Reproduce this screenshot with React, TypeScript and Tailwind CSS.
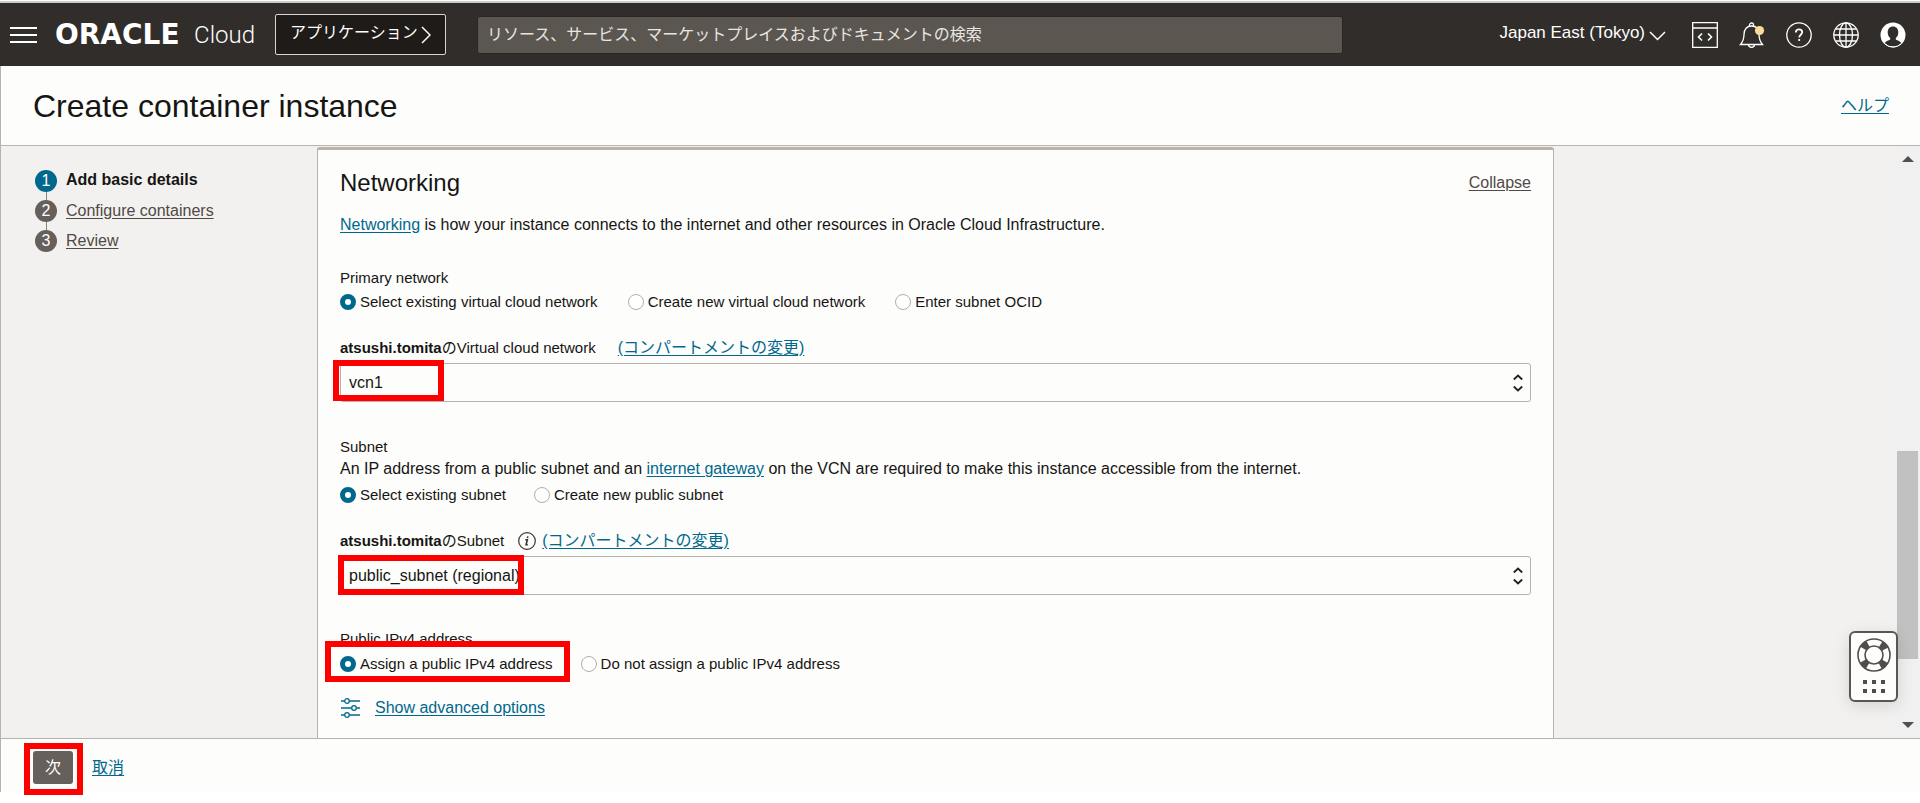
import { useState } from 'react'
import type { ReactNode } from 'react'

const linkClass = 'text-[#00688c] underline underline-offset-2'

function Highlight({ className }: { className: string }) {
  return <div aria-hidden="true" className={`pointer-events-none absolute z-10 border-6 border-[#ff0000] ${className}`} />
}

function TopBar() {
  return (
    <header className="flex h-[63px] items-center bg-[#312d2a] pr-[14px] pl-[10px] text-white">
      <button aria-label="Menu" className="flex w-[27px] shrink-0 flex-col gap-[5px]">
        <span className="h-[2px] bg-white" />
        <span className="h-[2px] bg-white" />
        <span className="h-[2px] bg-white" />
      </button>
      <a href="#home" className="ml-[18px] flex w-[200px] shrink-0 items-center justify-between whitespace-nowrap">
        <span className="font-['DejaVu_Sans',sans-serif] text-[28px] leading-8 font-bold">ORACLE</span>
        <span className="font-[Roboto,sans-serif] text-2xl leading-8 font-light">Cloud</span>
      </a>
      <button className="ml-5 flex h-[41px] w-[171px] shrink-0 items-center justify-between rounded-[2px] border border-[#d8d4d0] bg-[#1e1b18] px-[14px] pb-1 text-base whitespace-nowrap">
        アプリケーション
        <svg width="10" height="18" viewBox="0 0 10 18" fill="none" stroke="#fff" strokeWidth="1.5" className="mt-1">
          <path d="M1 1l8 8-8 8" />
        </svg>
      </button>
      <input
        type="search"
        aria-label="検索"
        placeholder="リソース、サービス、マーケットプレイスおよびドキュメントの検索"
        className="ml-[31px] h-[38px] min-w-0 flex-1 rounded-[3px] border border-[#2a2623] bg-[#5b5650] px-[9px] text-base text-white placeholder:text-[#e8e5e2]"
      />
      <div className="ml-[156px] flex shrink-0 items-center">
        <button className="mr-[26px] flex items-center gap-1 pb-1 text-[17px] leading-5 whitespace-nowrap">
          Japan East (Tokyo)
          <svg width="17" height="10" viewBox="0 0 17 10" fill="none" stroke="#fff" strokeWidth="1.5" className="mt-[7px]">
            <path d="M1 1l7.500 7.500L16 1" />
          </svg>
        </button>
        <div className="flex items-center gap-[21px]">
          <button aria-label="Developer tools">
            <svg width="26" height="26" viewBox="0 0 26 26" fill="none" stroke="#fff" strokeWidth="1.300">
              <path d="M.7.7h24.600v24.600H.7zM.7 6h24.600" />
              <path strokeWidth="1.600" d="M10 11.500L6.500 15l3.500 3.500M16 11.500l3.500 3.500-3.500 3.500" />
            </svg>
          </button>
          <button aria-label="Announcements">
            <svg width="26" height="26" viewBox="0 0 26 26" fill="none" stroke="#fff" strokeWidth="1.300">
              <path d="M1.500 22.500c2.500-3 3.500-5 3.500-10C5 7 8 4 12.500 4S20 7 20 12.500c0 5 1 7 3.500 10z" />
              <path d="M10.500 4V3a2 2 0 0 1 4 0v1M9.500 22.500c0 1.500 1 2.800 3 2.800s3-1.300 3-2.800" />
              <circle cx="20.500" cy="8.500" r="4.600" fill="#f9dc9b" stroke="none" />
            </svg>
          </button>
          <button aria-label="Help">
            <svg width="26" height="26" viewBox="0 0 26 26" fill="none" stroke="#fff" strokeWidth="1.300">
              <circle cx="13" cy="13" r="12.200" />
              <path strokeWidth="1.800" d="M9.800 10.600c0-2 1.300-3.300 3.200-3.300s3.200 1.200 3.200 3c0 2.400-3 2.500-3 5.200M13.200 17v2" />
            </svg>
          </button>
          <button aria-label="Language">
            <svg width="26" height="26" viewBox="0 0 26 26" fill="none" stroke="#fff" strokeWidth="1.300">
              <circle cx="13" cy="13" r="12.200" />
              <ellipse cx="13" cy="13" rx="6.500" ry="12.200" />
              <path d="M13 .8v24.400M.8 13h24.400M3 7h20M3 19h20" />
            </svg>
          </button>
          <button aria-label="Profile">
            <svg width="26" height="26" viewBox="0 0 26 26">
              <circle cx="13" cy="13" r="12.500" fill="#fff" />
              <path fill="#312d2a" d="M13 4.500c3.300 0 5.300 2.400 5.300 5.700 0 2.500-1 4.700-2.500 5.900v1.500c1.500 1 4 1.500 5.700 3.400a12 12 0 0 1-17 0c1.700-1.900 4.200-2.400 5.700-3.400v-1.500c-1.500-1.200-2.500-3.400-2.500-5.900 0-3.300 2-5.700 5.300-5.700z" />
              <path fill="none" stroke="#fff" strokeWidth="1" d="M4.500 21.500a12 12 0 0 0 17 0" />
            </svg>
          </button>
        </div>
      </div>
    </header>
  )
}

const steps = ['Add basic details', 'Configure containers', 'Review']

function Steps() {
  return (
    <nav className="w-[316px] shrink-0 pt-6 pl-[34px]">
      <ol>
        {steps.map((step, i) => (
          <li key={step} className="flex gap-[9px]">
            <div className="flex flex-col items-center">
              <span className={`h-[22px] w-[22px] rounded-full text-center text-base leading-[22px] text-white ${i === 0 ? 'bg-[#00688c]' : 'bg-[#665f5b]'}`}>{i + 1}</span>
              {i < steps.length - 1 && <span className="h-2 w-px bg-[#8a847f]" />}
            </div>
            {i === 0
              ? <span className="text-base leading-5 font-bold">{step}</span>
              : <a href={`#step-${i + 1}`} className="text-base leading-[22px] text-[#4f4a46] underline underline-offset-2">{step}</a>}
          </li>
        ))}
      </ol>
    </nav>
  )
}

function Radio({ name, value, selected, onSelect }: { name: string; value: string; selected: string; onSelect: (v: string) => void }) {
  const checked = selected === value
  return (
    <label className="flex items-center gap-1 text-[15px] leading-6">
      <input
        type="radio"
        name={name}
        checked={checked}
        onChange={() => onSelect(value)}
        className={`h-4 w-4 appearance-none rounded-full bg-white ${checked ? 'border-[5px] border-[#00688c]' : 'border border-[#b3aeaa]'}`}
      />
      {value}
    </label>
  )
}

function RadioRow({ label, name, options, className }: { label: string; name: string; options: string[]; className: string }) {
  const [selected, setSelected] = useState(options[0])
  return (
    <div role="radiogroup" aria-label={label} className={`flex ${className}`}>
      {options.map(o => <Radio key={o} name={name} value={o} selected={selected} onSelect={setSelected} />)}
    </div>
  )
}

function SelectField({ id, label, value, info, children }: { id: string; label: string; value: string; info?: boolean; children: ReactNode }) {
  return (
    <div className="mt-[22px]">
      <div className="flex h-6 items-center text-[15px] leading-6">
        <label htmlFor={id}><b>atsushi.tomita</b>の{label}</label>
        {info && (
          <svg width="18" height="18" viewBox="0 0 18 18" fill="none" stroke="#3a3632" strokeWidth="1.200" className="ml-[14px]">
            <circle cx="9" cy="9" r="8.300" />
            <path strokeWidth="1.600" d="M7.300 7.800h2l-1.200 5h1.700M9.800 4.400l-.4 1.700" />
          </svg>
        )}
        <a href="#compartment" className={`text-base leading-6 ${linkClass} ${info ? 'ml-[6px]' : 'ml-[22px]'}`}>(コンパートメントの変更)</a>
      </div>
      <div className="relative mt-[3px]">
        <select id={id} className="block h-[39px] w-full appearance-none rounded-[3px] border border-[#b8b2ad] bg-transparent px-2 text-base">
          <option>{value}</option>
        </select>
        <svg width="10" height="18" viewBox="0 0 10 18" fill="none" stroke="#24201d" strokeWidth="1.800" className="pointer-events-none absolute top-[11px] right-2">
          <path d="M.8 5.500L5 1.500l4.200 4M.8 12.500l4.200 4 4.200-4" />
        </svg>
        {children}
      </div>
    </div>
  )
}

function Networking() {
  return (
    <section className="min-w-0 flex-1 rounded-t-[3px] border-x border-t-3 border-[#b8b2ad] bg-[#fdfdfc] px-[22px] pt-[17px] pb-5">
      <div className="flex items-center justify-between">
        <h2 className="text-2xl leading-8">Networking</h2>
        <a href="#collapse" className="text-base leading-5 text-[#4f4a46] underline underline-offset-2">Collapse</a>
      </div>
      <p className="mt-4 text-base leading-5">
        <a href="#networking" className={linkClass}>Networking</a> is how your instance connects to the internet and other resources in Oracle Cloud Infrastructure.
      </p>

      <h3 className="mt-[33px] text-[15px] leading-5">Primary network</h3>
      <RadioRow
        label="Primary network"
        name="network"
        className="mt-[2px] gap-[30px]"
        options={['Select existing virtual cloud network', 'Create new virtual cloud network', 'Enter subnet OCID']}
      />
      <SelectField id="vcn" label="Virtual cloud network" value="vcn1">
        <Highlight className="-top-[3px] -left-[7px] h-[41px] w-[111px]" />
      </SelectField>

      <h3 className="mt-[35px] text-[15px] leading-5">Subnet</h3>
      <p className="mt-[2px] text-base leading-5">
        An IP address from a public subnet and an <a href="#gateway" className={linkClass}>internet gateway</a> on the VCN are required to make this instance accessible from the internet.
      </p>
      <RadioRow label="Subnet" name="subnet" className="mt-1 gap-7" options={['Select existing subnet', 'Create new public subnet']} />
      <SelectField id="subnet" label="Subnet" value="public_subnet (regional)" info>
        <Highlight className="-top-px -left-[2px] h-10 w-[186px]" />
      </SelectField>

      <h3 className="mt-[34px] text-[15px] leading-5">Public IPv4 address</h3>
      <div className="relative mt-[3px]">
        <RadioRow label="Public IPv4 address" name="ip" className="gap-7" options={['Assign a public IPv4 address', 'Do not assign a public IPv4 address']} />
        <Highlight className="-top-[11px] -left-[15px] h-[41px] w-[245px]" />
      </div>
      <div className="mt-[22px] flex items-center gap-[14px]">
        <svg width="21" height="20" viewBox="-1 0 21 20" fill="none" stroke="#00688c" strokeWidth="1.300">
          <path d="M0 3h3.500M8.500 3H19M0 10h10.500M15.500 10H19M0 17h3.500M8.500 17H19" />
          <circle cx="6" cy="3" r="2.300" />
          <circle cx="13" cy="10" r="2.300" />
          <circle cx="6" cy="17" r="2.300" />
        </svg>
        <a href="#advanced" className={`text-base leading-5 ${linkClass}`}>Show advanced options</a>
      </div>
    </section>
  )
}

function ScrollTrack() {
  return (
    <div aria-hidden="true" className="flex w-[25px] shrink-0 flex-col items-center bg-[#f0f0f1] py-[10px]">
      <svg width="12" height="6" viewBox="0 0 12 6"><path d="M6 0l6 6H0z" fill="#505050" /></svg>
      <div className="grow-[289]" />
      <div className="w-[21px] grow-[208] bg-[#c1c1c1]" />
      <div className="grow-[63]" />
      <svg width="12" height="6" viewBox="0 0 12 6"><path d="M0 0h12L6 6z" fill="#505050" /></svg>
    </div>
  )
}

function HelpWidget() {
  return (
    <button aria-label="Support" className="absolute right-[22px] bottom-9 z-20 flex h-[71px] w-[49px] flex-col items-center gap-2 rounded-[6px] border-2 border-[#5b5652] bg-[#fdfdfc] pt-[5px] shadow-[0_4px_16px_rgba(0,0,0,0.12)]">
      <svg width="34" height="34" viewBox="0 0 34 34" fill="none" stroke="#524d49">
        <circle cx="17" cy="17" r="12.500" strokeWidth="7" strokeDasharray="6.500 13.135" strokeDashoffset="-6.570" />
        <circle cx="17" cy="17" r="16" strokeWidth="1.600" />
        <circle cx="17" cy="17" r="9" strokeWidth="1.600" />
      </svg>
      <span className="grid grid-cols-3 gap-[5px]">
        {[0, 1, 2, 3, 4, 5].map(n => <span key={n} className="h-1 w-1 bg-[#524d49]" />)}
      </span>
    </button>
  )
}

export default function App() {
  return (
    <div className="flex min-h-screen flex-col bg-white pt-px pb-[11px] font-['Liberation_Sans','Noto_Sans_CJK_JP',sans-serif] text-[#161513]">
      <div className="h-[2px] bg-[#cbcccc]" />
      <TopBar />
      <div className="flex flex-1 flex-col border-l border-[#b8b2ad]">
        <div className="flex h-20 items-center justify-between border-b border-[#b8b2ad] bg-[#fdfdfc] pr-[31px] pl-8">
          <h1 className="text-[32px] leading-10">Create container instance</h1>
          <a href="#help" className={`text-base leading-6 ${linkClass}`}>ヘルプ</a>
        </div>
        <main className="relative flex flex-1 bg-[#f3f1f0]">
          <Steps />
          <div className="flex min-w-0 flex-1 pt-px">
            <Networking />
          </div>
          <div className="w-[341px] shrink-0" />
          <ScrollTrack />
          <HelpWidget />
        </main>
        <footer className="flex h-[54px] items-center gap-[19px] border-t border-[#b8b2ad] bg-[#fdfdfb] pt-1 pl-8">
          <div className="relative">
            <button className="block h-[33px] w-10 rounded-[3px] bg-[#665f5b] text-base leading-8 text-white">次</button>
            <Highlight className="-top-2 -left-[9px] h-[52px] w-[59px]" />
          </div>
          <a href="#cancel" className={`text-base leading-6 ${linkClass}`}>取消</a>
        </footer>
      </div>
    </div>
  )
}
